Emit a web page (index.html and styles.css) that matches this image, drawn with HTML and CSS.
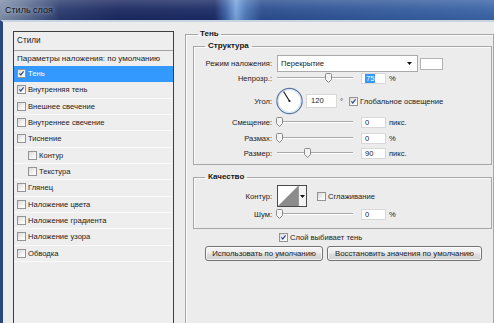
FILE: index.html
```html
<!DOCTYPE html>
<html>
<head>
<meta charset="utf-8">
<title>Стиль слоя</title>
<link rel="stylesheet" href="styles.css">
</head>
<body>
<div class="window">
  <div class="titlebar"><span class="title">Стиль слоя</span></div>
  <div class="client">
    <div class="styles-panel">
      <div class="sp-head">Стили</div>
      <div class="sp-params">Параметры наложения: по умолчанию</div>
      <div class="sp-item selected"><span class="cb"><svg viewBox="0 0 9 9"><path d="M1.8 4.3 L3.6 6.4 L7.2 1.9" /></svg></span>Тень</div>
      <div class="sp-item"><span class="cb"><svg viewBox="0 0 9 9"><path d="M1.8 4.3 L3.6 6.4 L7.2 1.9" /></svg></span>Внутренняя тень</div>
      <div class="sp-item"><span class="cb"></span>Внешнее свечение</div>
      <div class="sp-item"><span class="cb"></span>Внутреннее свечение</div>
      <div class="sp-item"><span class="cb"></span>Тиснение</div>
      <div class="sp-item sub"><span class="cb"></span>Контур</div>
      <div class="sp-item sub"><span class="cb"></span>Текстура</div>
      <div class="sp-item"><span class="cb"></span>Глянец</div>
      <div class="sp-item"><span class="cb"></span>Наложение цвета</div>
      <div class="sp-item"><span class="cb"></span>Наложение градиента</div>
      <div class="sp-item"><span class="cb"></span>Наложение узора</div>
      <div class="sp-item"><span class="cb"></span>Обводка</div>
    </div>

    <fieldset class="group outer">
      <legend>Тень</legend>

      <fieldset class="group inner structure">
        <legend>Структура</legend>

        <div class="row r-mode">
          <span class="lbl">Режим наложения:</span>
          <div class="select"><span>Перекрытие</span><svg class="arrow" viewBox="0 0 5 3"><path d="M0 0 H5 L2.5 3 Z"/></svg></div>
          <div class="swatch"></div>
        </div>

        <div class="row r-opacity">
          <span class="lbl">Непрозр.:</span>
          <div class="slider"><span class="thumb" style="left:48px"><svg viewBox="0 0 7 10"><path d="M0.5 1.5 Q0.5 0.5 1.5 0.5 H5.5 Q6.5 0.5 6.5 1.5 V6.5 L3.5 9.5 L0.5 6.5 Z"/></svg></span></div>
          <div class="num"><span class="sel">75</span></div>
          <span class="unit">%</span>
        </div>

        <div class="row r-angle">
          <span class="lbl">Угол:</span>
          <svg class="dial" viewBox="0 0 28 28">
            <circle cx="13.5" cy="14" r="12.6" class="ring-out"/>
            <circle cx="13.5" cy="14" r="11.4" class="ring-in"/>
            <line x1="13.5" y1="14" x2="7.6" y2="4.6" class="hand"/>
            <circle cx="13.5" cy="14" r="1.1" class="dot"/>
          </svg>
          <div class="num angle">120</div>
          <span class="unit deg">°</span>
          <span class="cb gl"><svg viewBox="0 0 9 9"><path d="M1.8 4.3 L3.6 6.4 L7.2 1.9" /></svg></span>
          <span class="cbtext">Глобальное освещение</span>
        </div>

        <div class="row r-offset">
          <span class="lbl">Смещение:</span>
          <div class="slider"><span class="thumb" style="left:-1px"><svg viewBox="0 0 7 10"><path d="M0.5 1.5 Q0.5 0.5 1.5 0.5 H5.5 Q6.5 0.5 6.5 1.5 V6.5 L3.5 9.5 L0.5 6.5 Z"/></svg></span></div>
          <div class="num">0</div>
          <span class="unit">пикс.</span>
        </div>

        <div class="row r-spread">
          <span class="lbl">Размах:</span>
          <div class="slider"><span class="thumb" style="left:-1px"><svg viewBox="0 0 7 10"><path d="M0.5 1.5 Q0.5 0.5 1.5 0.5 H5.5 Q6.5 0.5 6.5 1.5 V6.5 L3.5 9.5 L0.5 6.5 Z"/></svg></span></div>
          <div class="num">0</div>
          <span class="unit">%</span>
        </div>

        <div class="row r-size">
          <span class="lbl">Размер:</span>
          <div class="slider"><span class="thumb" style="left:27px"><svg viewBox="0 0 7 10"><path d="M0.5 1.5 Q0.5 0.5 1.5 0.5 H5.5 Q6.5 0.5 6.5 1.5 V6.5 L3.5 9.5 L0.5 6.5 Z"/></svg></span></div>
          <div class="num">90</div>
          <span class="unit">пикс.</span>
        </div>
      </fieldset>

      <fieldset class="group inner quality">
        <legend>Качество</legend>

        <div class="row r-contour">
          <span class="lbl">Контур:</span>
          <div class="contour">
            <svg class="curve" viewBox="0 0 20 20" preserveAspectRatio="none"><path d="M0 20 L20 0 V20 Z"/></svg>
            <div class="c-drop"><svg viewBox="0 0 5 3"><path d="M0 0 H5 L2.5 3 Z"/></svg></div>
          </div>
          <span class="cb aa"></span>
          <span class="cbtext">Сглаживание</span>
        </div>

        <div class="row r-noise">
          <span class="lbl">Шум:</span>
          <div class="slider"><span class="thumb" style="left:-1px"><svg viewBox="0 0 7 10"><path d="M0.5 1.5 Q0.5 0.5 1.5 0.5 H5.5 Q6.5 0.5 6.5 1.5 V6.5 L3.5 9.5 L0.5 6.5 Z"/></svg></span></div>
          <div class="num">0</div>
          <span class="unit">%</span>
        </div>
      </fieldset>

      <div class="knock">
        <span class="cb"><svg viewBox="0 0 9 9"><path d="M1.8 4.3 L3.6 6.4 L7.2 1.9" /></svg></span>
        <span class="cbtext">Слой выбивает тень</span>
      </div>

      <div class="buttons">
        <button class="btn b-use">Использовать по умолчанию</button>
        <button class="btn b-reset">Восстановить значения по умолчанию</button>
      </div>
    </fieldset>
  </div>
</div>
</body>
</html>
```

FILE: styles.css
```css
* { box-sizing: border-box; }

body {
  margin: 0;
  font-family: "Liberation Sans", Arial, sans-serif;
  font-size: 7.6px;
  color: #222222;
}

.window {
  width: 494px;
  height: 323px;
  overflow: hidden;
  background: #ececec;
  display: flex;
  flex-direction: column;
}

/* ---------- title bar ---------- */
.titlebar {
  height: 20px;
  flex: none;
  display: flex;
  align-items: center;
  padding-left: 5px;
  background:
    linear-gradient(180deg, rgba(255,255,255,0.18) 0%, rgba(255,255,255,0.05) 45%, rgba(0,0,0,0.05) 100%),
    linear-gradient(90deg, #8190aa 0px, #5e6f93 25px, #2a3a6e 60px, #1a2860 120px, #1b2b66 215px, #3d64a6 226px, #79a3dc 236px, #4c76b6 246px, #2b4d8e 262px, #2f5595 330px, #3a63a6 494px);
}

.title {
  font-size: 9px;
  color: #141414;
  text-shadow: 0 0 4px rgba(230,236,245,0.9);
}

/* ---------- client ---------- */
.client {
  flex: 1;
  display: flex;
  align-items: flex-start;
  border-left: 3px solid #29467f;
  border-top: 2px solid #c9d4e2;
  padding-top: 7px;
}

/* ---------- styles list ---------- */
.styles-panel {
  flex: none;
  width: 161px;
  height: 300px;
  margin-top: 2px;
  margin-left: 10px;
  border: 1px solid #3e3e3e;
  background: #eeeeee;
}

.sp-head {
  height: 19px;
  line-height: 18px;
  padding-left: 3px;
  border-bottom: 1px solid #a2a2a2;
  font-size: 8.2px;
}

.sp-params {
  height: 15px;
  line-height: 15px;
  padding-left: 3px;
  white-space: nowrap;
  font-size: 8px;
}

.sp-item {
  height: 16.33px;
  display: flex;
  align-items: center;
  gap: 2px;
  padding-left: 3px;
  border-bottom: 1px solid #f9f9f9;
  white-space: nowrap;
}

.sp-item.sub { padding-left: 14px; }

.sp-item.selected {
  background: #3399ff;
  color: #ffffff;
  border-bottom-color: #3399ff;
}

/* ---------- checkbox ---------- */
.cb {
  flex: none;
  display: inline-block;
  width: 9px;
  height: 9px;
  border: 1px solid #939393;
  background: linear-gradient(135deg, #d9d9d9 0%, #f4f4f4 60%, #ffffff 100%);
}

.cb svg {
  display: block;
  width: 7px;
  height: 7px;
}

.cb svg path {
  fill: none;
  stroke: #2c4a8e;
  stroke-width: 1.5;
}

.cbtext { margin-left: 2px; white-space: nowrap; }

/* ---------- fieldsets ---------- */
.group {
  margin: 0;
  min-width: 0;
  border: 1px solid #a6a6a6;
  box-shadow: inset 1px 1px 0 #fafafa;
}

.group legend {
  font-weight: bold;
  font-size: 8px;
  color: #161616;
  line-height: 10px;
  height: 10px;
  padding: 0 2px;
}

.outer {
  flex: none;
  width: 309px;
  height: 320px;
  margin-left: 11px;
  padding: 2px 0 0 7px;
}

.outer > legend { margin-left: 5px; }

.inner {
  width: 299px;
  padding: 0;
}

.inner > legend {
  margin-left: 11px;
  padding: 0 3px;
}

.structure { padding-bottom: 5px; }

.quality {
  margin-top: 7px;
  padding-bottom: 8px;
}

/* ---------- rows ---------- */
.row {
  display: flex;
  align-items: center;
  white-space: nowrap;
}

.lbl {
  flex: none;
  width: 78px;
  margin-right: 5px;
  text-align: right;
}

.r-mode { height: 17px; margin-top: 4px; }
.r-opacity { height: 12px; }
.r-angle { height: 28px; margin-top: 3px; }
.r-offset { height: 12px; margin-top: 1px; }
.r-spread { height: 12px; margin-top: 4px; }
.r-size { height: 12px; margin-top: 3px; }
.r-contour { height: 22px; margin-top: 3px; }
.r-noise { height: 12px; margin-top: 1px; }

.select {
  flex: none;
  width: 141px;
  height: 17px;
  background: #ffffff;
  border: 1px solid #aaaaaa;
  display: flex;
  align-items: center;
  justify-content: space-between;
  padding: 0 5px 0 3px;
}

.select .arrow, .c-drop svg {
  width: 5px;
  height: 3px;
  display: block;
}

.select .arrow path, .c-drop svg path { fill: #111; }

.swatch {
  flex: none;
  width: 23px;
  height: 12px;
  margin-left: 2px;
  background: #ffffff;
  border: 1px solid #b4b4b4;
}

/* slider */
.slider {
  flex: none;
  position: relative;
  width: 76px;
  height: 12px;
  background: linear-gradient(180deg, transparent 5px, #a8a8a8 5px, #a8a8a8 6px, #ffffff 6px, #ffffff 7px, transparent 7px);
}

.thumb {
  position: absolute;
  top: 1px;
  width: 7px;
  height: 10px;
}

.thumb svg { display: block; width: 7px; height: 10px; }

.thumb svg path {
  fill: #f3f3f3;
  stroke: #8a8a8a;
  stroke-width: 1;
}

.num {
  flex: none;
  width: 25px;
  height: 11px;
  margin-left: 8px;
  background: #ffffff;
  border: 1px solid #d8d8d8;
  padding-left: 3px;
  line-height: 9px;
}

.num .sel {
  background: #3399ff;
  color: #ffffff;
  padding: 0 1px;
}

.unit { margin-left: 3px; }

/* angle */
.dial {
  flex: none;
  width: 28px;
  height: 28px;
  margin-left: -1px;
}

.dial .ring-out { fill: #ffffff; stroke: #5a7aa3; stroke-width: 1.3; }
.dial .ring-in { fill: none; stroke: #c8d4e4; stroke-width: 0.8; }
.dial .hand { stroke: #1b1b1b; stroke-width: 1.1; }
.dial .dot { fill: #111; }

.num.angle {
  width: 31px;
  height: 14px;
  margin-left: 2px;
  line-height: 12px;
  padding-left: 4px;
}

.unit.deg { margin-left: 3px; }

.cb.gl { margin-left: 6px; }

/* contour */
.contour {
  flex: none;
  width: 30px;
  height: 22px;
  display: flex;
  border: 1px solid #4a4a4a;
  background: #ffffff;
}

.contour .curve {
  display: block;
  width: 20px;
  height: 20px;
}

.contour .curve path { fill: #8c8c8c; }

.c-drop {
  flex: 1;
  border-left: 1px solid #9a9a9a;
  background: #f4f4f4;
  display: flex;
  align-items: center;
  justify-content: center;
}

.cb.aa { margin-left: 10px; }

/* knock out */
.knock {
  display: flex;
  align-items: center;
  height: 10px;
  margin-top: 3px;
  margin-left: 86px;
}

/* buttons */
.buttons {
  display: flex;
  gap: 4px;
  margin-top: 4px;
  margin-left: 12px;
}

.btn {
  height: 15px;
  padding: 0;
  font-family: inherit;
  font-size: 7.8px;
  color: #1a1a1a;
  border: 1px solid #747474;
  border-radius: 3px;
  background: linear-gradient(180deg, #f4f4f4 0%, #ececec 48%, #dedede 52%, #d2d2d2 100%);
  box-shadow: inset 0 0 0 1px rgba(255,255,255,0.7);
}

.b-use { width: 118px; }
.b-reset { width: 155px; }
```
